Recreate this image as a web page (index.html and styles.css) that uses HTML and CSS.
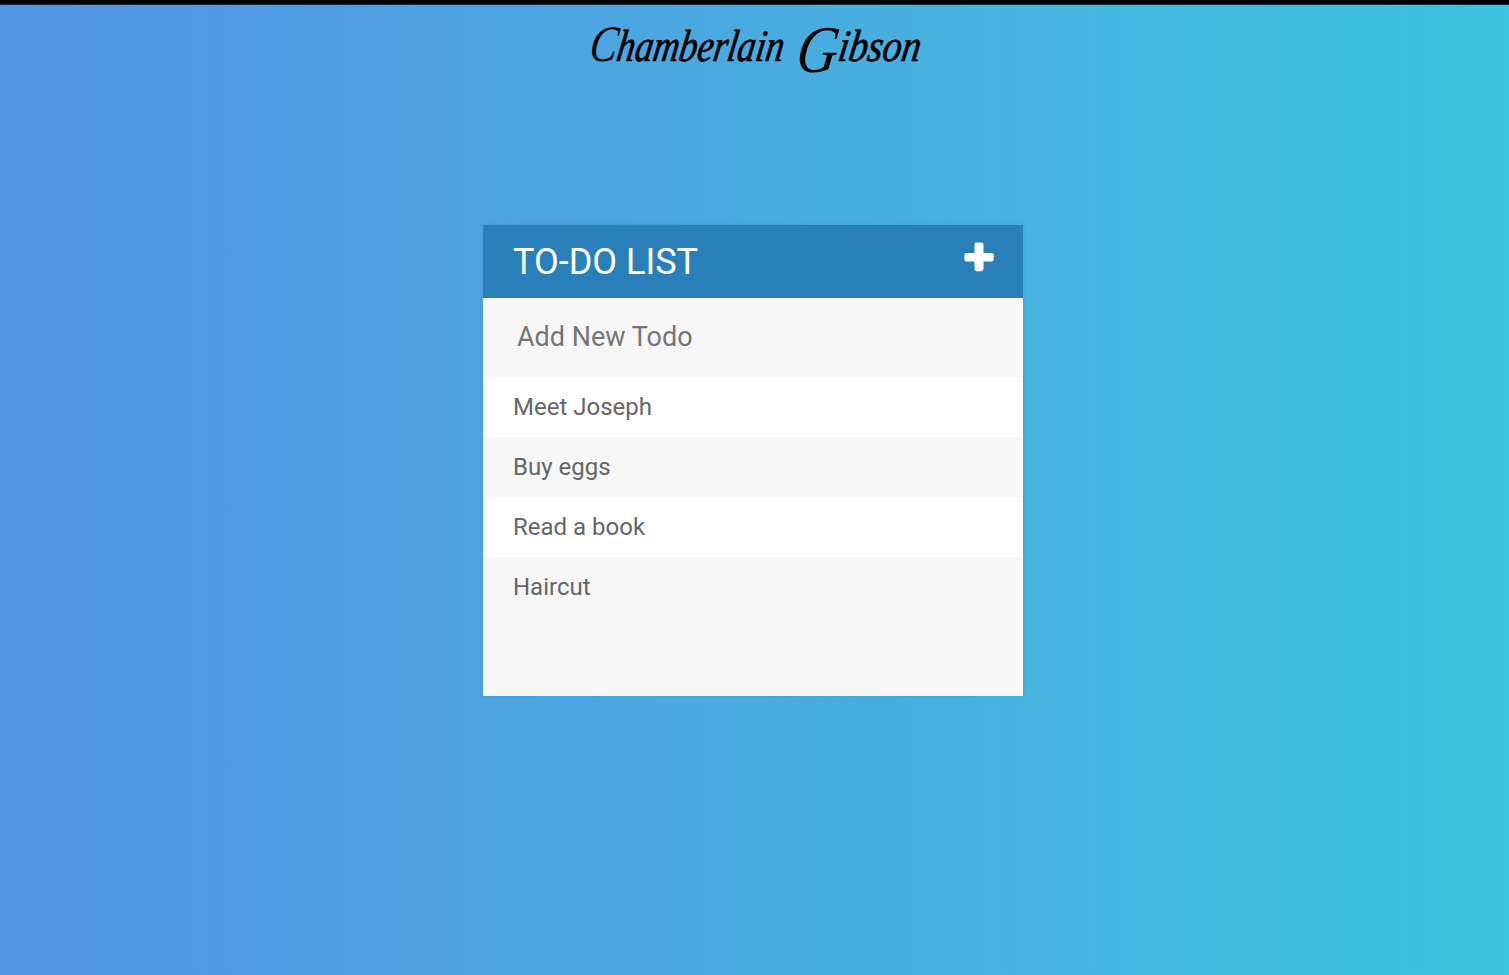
FILE: index.html
```html
<!DOCTYPE html>
<html lang="en">
<head>
<meta charset="utf-8">
<title>To-Do List</title>
<link rel="stylesheet" href="styles.css">
</head>
<body>
<header class="brand">
  <svg class="signature" width="340" height="60" viewBox="585 20 340 60" role="img" aria-label="Chamberlain Gibson">
    <g transform="translate(0 61) skewX(-9) translate(0 -61)">
      <text x="588" y="61" textLength="194" lengthAdjust="spacingAndGlyphs"><tspan class="capital-c">C</tspan><tspan class="letters">hamberlain</tspan></text>
      <text x="796" y="72" textLength="123" lengthAdjust="spacingAndGlyphs"><tspan class="capital-g">G</tspan><tspan class="letters" dy="-11">ibson</tspan></text>
    </g>
  </svg>
</header>
<main class="card">
  <div class="card-header">
    <h1 class="title">To-Do List</h1>
    <svg class="plus" width="30" height="30" viewBox="0 0 30 30"><path d="M12.6 0.5h4.8q2.1 0 2.1 2.1v8.3h8.1q2.1 0 2.1 2.1v4.4q0 2.1-2.1 2.1h-8.1v7.6q0 2.1-2.1 2.1h-4.8q-2.1 0-2.1-2.1v-7.6h-8q-2.1 0-2.1-2.1v-4.4q0-2.1 2.1-2.1h8v-8.3q0-2.1 2.1-2.1z"/></svg>
  </div>
  <input class="new-todo" type="text" placeholder="Add New Todo">
  <ul class="todos">
    <li class="todo">Meet Joseph</li>
    <li class="todo">Buy eggs</li>
    <li class="todo">Read a book</li>
    <li class="todo">Haircut</li>
  </ul>
</main>
</body>
</html>
```
FILE: styles.css
```css
* { box-sizing: border-box; }
body {
  margin: 0;
  height: 975px;
  overflow: hidden;
  border-top: 4px solid #000;
  background: linear-gradient(90deg, #5594e4, #4aa9e0 47%, #3dc4de);
  font-family: Roboto, sans-serif;
  display: flex;
  flex-direction: column;
}
.brand {
  height: 221px;
  padding: 15px 0 0 585px;
  border-top: 1px solid rgba(0, 0, 0, 0.7);
}
.signature { display: block; overflow: visible; }
.signature text {
  font-family: Vivaldi, "Liberation Serif", serif;
  font-style: italic;
  fill: #000;
}
.signature .capital-c { font-size: 51px; }
.signature .capital-g { font-size: 67px; }
.signature .letters {
  font-size: 45px;
  stroke: #000;
  stroke-width: 0.7px;
}
.card {
  width: 540px;
  height: 471px;
  margin-left: 483px;
  background: #f7f7f7;
  box-shadow: 0 0 3px rgba(0, 0, 0, 0.1);
}
.card-header {
  height: 73px;
  padding: 17px 29px 0 30px;
  background: #2980b9;
  display: flex;
  justify-content: space-between;
  align-items: flex-start;
}
.title {
  margin: 0;
  color: #fff;
  font-size: 36px;
  font-weight: 400;
  line-height: 40px;
  text-transform: uppercase;
}
.plus { fill: #fff; }
.new-todo {
  display: block;
  width: 100%;
  height: 79px;
  padding: 0 34px 2px;
  border: 0;
  background: #f7f7f7;
  color: #757575;
  font: 400 27px Roboto, sans-serif;
}
.new-todo::placeholder { color: #757575; }
.todos {
  margin: 0;
  padding: 0;
  list-style: none;
}
.todo {
  height: 60px;
  padding: 0 30px;
  background: #fff;
  color: #666;
  font-size: 24px;
  line-height: 60px;
}
.todo:nth-child(even) { background: #f7f7f7; }
```
